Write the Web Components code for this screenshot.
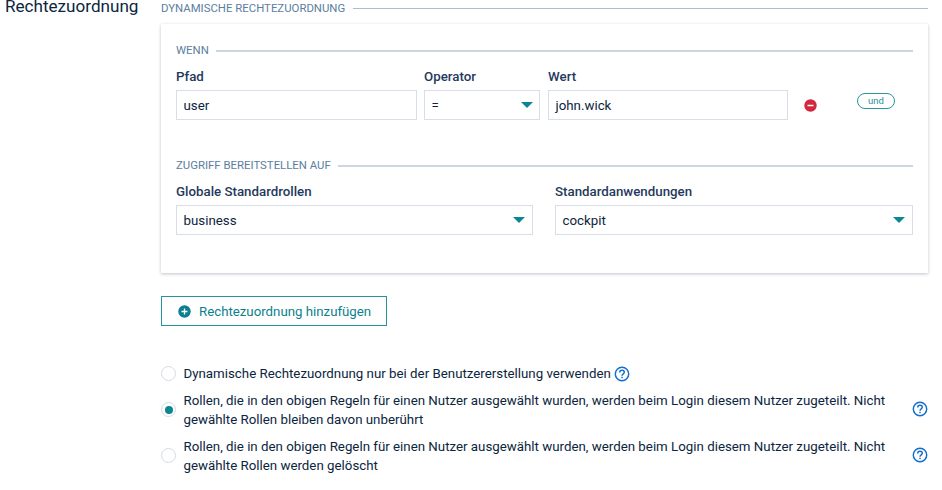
<!DOCTYPE html>
<html lang="de">
<head>
<meta charset="utf-8">
<title>Rechtezuordnung</title>
<style>
body{margin:0;width:942px;height:490px;overflow:hidden;background:#fff;font-family:Roboto,"Liberation Sans",sans-serif;font-size:13.3px;line-height:19px;color:#0b2540}
</style>
</head>
<body>
<role-mapping-page></role-mapping-page>
<script>
const define = (name, html) => customElements.define(name, class extends HTMLElement {
  constructor() {
    super();
    this.attachShadow({ mode: 'open' }).innerHTML = html;
  }
});

define('section-legend', `<style>
:host{display:flex;align-items:center;gap:7.5px;height:16px;font-size:11.38px;line-height:16px;color:#5c7e9f;white-space:nowrap}
i{flex:1;height:var(--rule-height,2px);margin-top:var(--rule-shift,2px);background:var(--rule,#ccd5e1)}
</style><slot></slot><i></i>`);

define('field-box', `<style>
:host{display:block;min-width:0}
label{display:block;height:16px;line-height:16px;font-weight:500;color:#1f3a5c;margin-bottom:5px;white-space:nowrap}
div{display:flex;align-items:center;justify-content:space-between;box-sizing:border-box;height:30px;border:1px solid #d8dee8;padding:0 7px 0 6.5px;background:#fff}
svg{display:none;width:12px;height:6px;fill:#0b8793}
:host([dropdown]) svg{display:block}
:host([snug]) div{padding-right:6px}
</style><label><slot name="label"></slot></label><div><span><slot></slot></span><svg viewBox="0 0 12 6"><path d="M0 0h12L6 6z"/></svg></div>`);

define('remove-icon', `<style>:host{display:block;width:13px;height:13px}svg{display:block}</style>
<svg width="13" height="13" viewBox="0 0 13 13"><circle cx="6.5" cy="6.5" r="6.2" fill="#d3273e"/><path d="M3.5 6.5h6" stroke="#fff" stroke-width="1.5"/></svg>`);

define('and-pill', `<style>
:host{display:block;box-sizing:border-box;width:38px;height:16px;border:1px solid #2b95a0;border-radius:8px;text-align:center;font-size:9.5px;line-height:14px;color:#2b8f9b}
</style><slot></slot>`);

define('add-button', `<style>
:host{display:flex;align-items:center;box-sizing:border-box;width:226px;height:30px;border:1px solid #2593a0;color:#0b7f8e;padding-left:16px;gap:8px;white-space:nowrap;font-size:13.25px}
</style><svg width="13" height="13" viewBox="0 0 13 13"><circle cx="6.5" cy="6.5" r="6.2" fill="#0b7f8e"/><path d="M3.5 6.5h6M6.5 3.5v6" stroke="#fff" stroke-width="1.3"/></svg><slot></slot>`);

define('help-icon', `<style>:host{display:block;flex:none;width:16px;height:16px}svg{display:block}</style>
<svg width="16" height="16" viewBox="0 0 16 16" fill="none" stroke="#116ecb" stroke-width="1.45"><circle cx="8" cy="8" r="6.7"/><path d="M5.7 6.4C5.7 5 6.7 4.2 8 4.2s2.3.8 2.3 2.1C10.3 7.8 8 7.9 8 9.7"/><path d="M8 10.7v1.5"/></svg>`);

define('radio-option', `<style>
:host{display:flex;align-items:center}
b{flex:none;box-sizing:border-box;width:15px;height:15px;border:1px solid #d5dae4;border-radius:50%;margin-right:7.5px;display:grid;place-items:center}
:host([checked]) b::after{content:"";width:8px;height:8px;border-radius:50%;background:#0b8793}
p{margin:0;white-space:nowrap}
help-icon{margin-left:3px}
:host([wide]) p{flex:1}
:host([wide]) b{margin-bottom:1px}
:host([wide]) help-icon{margin-bottom:2px}
</style><b></b><p><slot></slot></p><help-icon></help-icon>`);

define('rule-card', `<style>
:host{display:block;box-sizing:border-box;height:249px;padding:18px 15px 0;background:#fff;box-shadow:0 1px 3px rgba(40,60,80,.3)}
.when{display:grid;grid-template-columns:241px 116px 241px 13px 38px;column-gap:7px;margin:11px 0 37px}
.value{margin-left:1px}
remove-icon{margin:30px 0 0 9px}
and-pill{margin:24px 0 0 42px}
.grant{display:grid;grid-template-columns:357px 358px;justify-content:space-between;margin-top:11px}
</style>
<section-legend>WENN</section-legend>
<div class="when">
<field-box><span slot="label">Pfad</span>user</field-box>
<field-box dropdown snug><span slot="label">Operator</span>=</field-box>
<field-box class="value"><span slot="label">Wert</span>john.wick</field-box>
<remove-icon></remove-icon><and-pill>und</and-pill>
</div>
<section-legend>ZUGRIFF BEREITSTELLEN AUF</section-legend>
<div class="grant">
<field-box dropdown><span slot="label">Globale Standardrollen</span>business</field-box>
<field-box dropdown><span slot="label">Standardanwendungen</span>cockpit</field-box>
</div>`);

define('role-mapping-page', `<style>
:host{display:grid;grid-template-columns:156px 767px;padding-left:5px}
h2{margin:0;font-size:17.1px;line-height:12px;font-weight:400;color:#0b2540}
.top{--rule:#a9bfd4;--rule-height:1px;--rule-shift:0px}
rule-card{margin-top:8px}
add-button{margin-top:23px}
.options{display:grid;gap:8px;margin-top:38px}
</style>
<h2>Rechtezuordnung</h2>
<main>
<section-legend class="top">DYNAMISCHE RECHTEZUORDNUNG</section-legend>
<rule-card></rule-card>
<add-button>Rechtezuordnung hinzufügen</add-button>
<div class="options">
<radio-option>Dynamische Rechtezuordnung nur bei der Benutzererstellung verwenden</radio-option>
<radio-option wide checked>Rollen, die in den obigen Regeln für einen Nutzer ausgewählt wurden, werden beim Login diesem Nutzer zugeteilt. Nicht<br>gewählte Rollen bleiben davon unberührt</radio-option>
<radio-option wide>Rollen, die in den obigen Regeln für einen Nutzer ausgewählt wurden, werden beim Login diesem Nutzer zugeteilt. Nicht<br>gewählte Rollen werden gelöscht</radio-option>
</div>
</main>`);
</script>
</body>
</html>
